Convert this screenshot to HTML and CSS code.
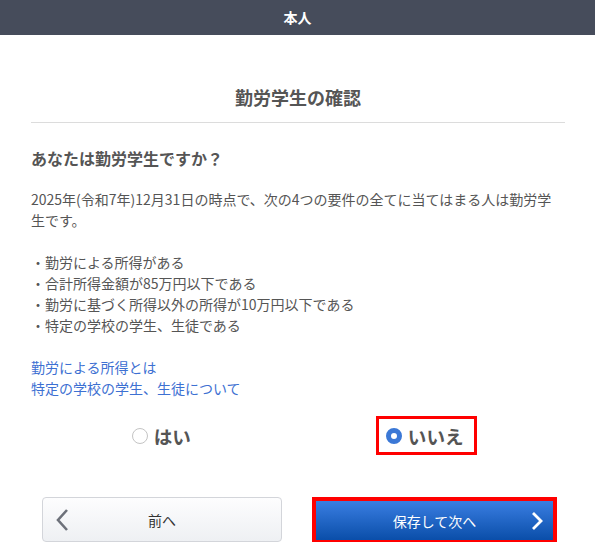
FILE: index.html
```html
<!DOCTYPE html>
<html lang="ja">
<head>
<meta charset="utf-8">
<title>勤労学生の確認</title>
<link rel="stylesheet" href="styles.css">
</head>
<body>
<header class="topbar">本人</header>
<main class="content">
  <h1 class="title">勤労学生の確認</h1>
  <h2 class="question">あなたは勤労学生ですか？</h2>
  <div class="text">
    <p class="para">2025年(令和7年)12月31日の時点で、次の4つの要件の全てに当てはまる人は勤労学生です。</p>
    <ul class="reqs">
      <li>・勤労による所得がある</li>
      <li>・合計所得金額が85万円以下である</li>
      <li>・勤労に基づく所得以外の所得が10万円以下である</li>
      <li>・特定の学校の学生、生徒である</li>
    </ul>
    <div class="links">
      <a class="link" href="#">勤労による所得とは</a>
      <a class="link" href="#">特定の学校の学生、生徒について</a>
    </div>
  </div>
  <div class="choices">
    <div class="choice-cell">
      <label class="choice"><span class="radio"></span><span class="choice-text">はい</span></label>
    </div>
    <div class="choice-cell">
      <label class="choice choice-marked"><span class="radio radio-on"></span><span class="choice-text">いいえ</span></label>
    </div>
  </div>
  <div class="actions">
    <button class="btn btn-prev" type="button">
      <svg class="chev" width="14" height="22" viewBox="0 0 14 22"><path d="M12 1 L3 11 L12 21" fill="none" stroke="#6d717a" stroke-width="2.6"/></svg>
      <span>前へ</span>
    </button>
    <button class="btn btn-next" type="button">
      <span>保存して次へ</span>
      <svg class="chev chev-r" width="14" height="18" viewBox="0 0 14 18"><path d="M3 1 L11 9 L3 17" fill="none" stroke="#fff" stroke-width="2.8"/></svg>
    </button>
  </div>
</main>
</body>
</html>
```
FILE: styles.css
```css
* { box-sizing: border-box; }
body {
  margin: 0;
  font-family: "Noto Sans CJK JP", "Noto Sans", sans-serif;
  color: #555;
  background: #fff;
}
.topbar {
  height: 35px;
  line-height: 35px;
  background: #464c5b;
  color: #fff;
  font-weight: 700;
  font-size: 14px;
  text-align: center;
}
.content {
  padding: 0 30px 0 31px;
}
.title {
  margin: 49px 0 0;
  padding-bottom: 11px;
  font-size: 18px;
  line-height: 27px;
  font-weight: 700;
  text-align: center;
  color: #555;
  border-bottom: 1px solid #dcdcdc;
}
.question {
  margin: 23px 0 0;
  font-size: 16px;
  line-height: 24px;
  font-weight: 700;
  color: #555;
}
.text {
  margin-top: 19px;
  font-size: 14px;
  line-height: 21px;
}
.para { margin: 0 0 21px; }
.reqs {
  list-style: none;
  margin: 0 0 21px;
  padding: 0;
}
.links {
  display: flex;
  flex-direction: column;
  align-items: flex-start;
}
.link {
  color: #3d70d2;
  text-decoration: none;
}
.choices {
  margin-top: 17px;
  padding-right: 7px;
  display: grid;
  grid-template-columns: 1fr 1fr;
}
.choice-cell {
  display: flex;
  justify-content: center;
}
.choice {
  display: flex;
  align-items: center;
  gap: 6px;
  height: 39px;
  padding: 0 10px 0 7px;
  border: 3px solid transparent;
  font-size: 18.6px;
  font-weight: 700;
  color: #555;
}
.choice-marked { border-color: #f00; }
.radio {
  width: 16px;
  height: 16px;
  border-radius: 50%;
  border: 1px solid #c4c4c4;
  background: #fff;
}
.radio-on {
  border: 5px solid #3b78d6;
  background: #fff;
}
.actions {
  margin-top: 42px;
  padding: 0 12px 0 11px;
  display: flex;
  align-items: flex-start;
  justify-content: space-between;
}
.btn {
  position: relative;
  font-family: inherit;
  font-size: 14px;
  display: flex;
  align-items: center;
  justify-content: center;
  cursor: pointer;
}
.btn-prev {
  width: 240px;
  height: 45px;
  border: 1px solid #d3d5da;
  border-radius: 4px;
  background: linear-gradient(#fdfdfe, #eef0f3);
  color: #333;
}
.btn-next {
  width: 237px;
  height: 39px;
  margin-top: 4px;
  border: none;
  border-radius: 0;
  background: linear-gradient(#3a7ee2, #0a4ea9);
  color: #fff;
  outline: 4px solid #f00;
}
.chev {
  position: absolute;
  left: 12px;
  top: 11px;
}
.chev-r {
  left: auto;
  right: 9px;
  top: 11px;
}
```
